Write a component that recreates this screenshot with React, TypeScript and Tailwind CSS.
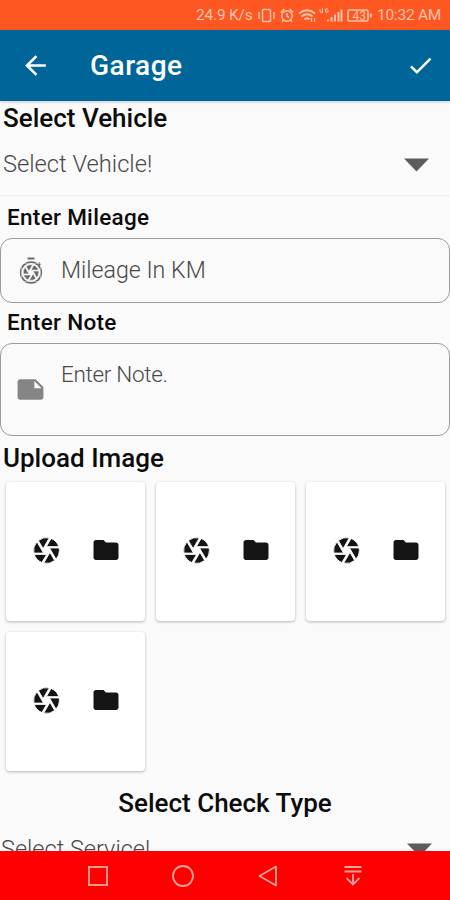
import { MdArrowBack, MdCamera, MdCheck, MdFolder, MdNote } from "react-icons/md";

interface IFieldLabel {
  text: string;
}

const images: number[] = [1, 2, 3, 4];

function StatusBar() {
  return (
    <div className="flex h-[30px] shrink-0 items-center bg-[#ff5722] pl-[196px] pt-[2px] text-[#ffc4ae]">
      <p className="w-[61px] whitespace-nowrap text-[15.5px] leading-none tracking-[-0.2px]">24.9 K/s</p>
      {/* vibrate, alarm, wifi, signal, battery */}
      <svg width="120" height="20" viewBox="0 0 120 20" fill="none" stroke="currentColor" strokeWidth="1.5">
        <rect x="5.5" y="3.5" width="8" height="12" rx="1" />
        <path d="M2 6v7M17 6v7" />
        <circle cx="30" cy="10" r="5.2" />
        <path d="M30 7v3.2l2 1.3M23.8 6.5l3.5-3.5M36.2 6.5l-3.5-3.5M26.5 14L25 15.8M33.5 14L35 15.8" />
        <path d="M42 7.5q8-6.5 16 0M44.5 10.5q5.5-4.5 11 0M47.5 13.5q2.5-2.5 5 0" strokeWidth="1.8" />
        <path d="M54.5 12v4M57.5 12v4" strokeWidth="1.2" />
        <path d="M63 3v3h3M65.5 2v5M71 3h-2.5v3h2.5v-2" strokeWidth="1" />
        <path d="M71 15.5v-2M74.5 15.5v-4.5M78 15.5V8.500M81.5 15.500V6M84.5 15.500V3.500" strokeWidth="2" />
        <rect x="91" y="4" width="20" height="11" rx="1.5" />
        <path d="M113.8 7.5v4" strokeWidth="2" />
        <text x="95.5" y="14" fill="currentColor" stroke="none" fontSize="12">43</text>
      </svg>
      <p className="whitespace-nowrap text-[15.5px] leading-none tracking-[-0.25px]">10:32 AM</p>
    </div>
  );
}

function Header() {
  return (
    <header className="flex h-[71px] shrink-0 items-center bg-[#006699] pl-[20px] pr-[15px] text-white shadow-[0_1px_3px_rgba(0,0,0,0.2)]">
      <MdArrowBack size={31} />
      <h1 className="ml-[39px] grow text-[28px] font-medium leading-none tracking-[0.5px]">Garage</h1>
      <MdCheck size={29} />
    </header>
  );
}

function FieldLabel({ text }: IFieldLabel) {
  return <h3 className="pl-[7px] text-[22.5px] font-medium leading-[30px] tracking-[0.3px]">{text}</h3>;
}

function DropArrow() {
  return (
    <svg width="25" height="14" viewBox="0 0 25 14" fill="#5c5c5c">
      <path d="M0 0.5h25L12.5 13.5z" />
    </svg>
  );
}

function MileageIcon() {
  return (
    <svg width="24" height="28" viewBox="0 0 24 28" fill="none" stroke="#6a6a6a" strokeWidth="1.7">
      <path d="M8.5 1.5h7M19.5 6l2 2" strokeWidth="2" />
      <circle cx="12" cy="15.5" r="10.3" />
      <MdCamera x="2.5" y="6" size={19} color="#6a6a6a" stroke="#fafafa" strokeWidth={1} />
    </svg>
  );
}

function ImageCard() {
  return (
    <div className="flex h-[139px] w-[139px] items-center justify-center gap-[29px] rounded-[4px] bg-white pb-[3px] text-[#141414] shadow-[0_1px_3px_rgba(0,0,0,0.28)]">
      <MdCamera size={31} stroke="#ffffff" strokeWidth={0.7} />
      <MdFolder size={30} />
    </div>
  );
}

function NavBar() {
  return (
    <nav className="flex h-[49px] shrink-0 items-center gap-[61px] bg-[#ff0000] pl-[86px]">
      <svg width="24" height="24" viewBox="0 0 24 24" fill="none" stroke="#ffa39c" strokeWidth="1.8">
        <rect x="3" y="3" width="18" height="18" />
      </svg>
      <svg width="24" height="24" viewBox="0 0 24 24" fill="none" stroke="#ffa39c" strokeWidth="1.8">
        <circle cx="12" cy="12" r="10" />
      </svg>
      <svg width="24" height="24" viewBox="0 0 24 24" fill="none" stroke="#ffa39c" strokeWidth="1.8" strokeLinejoin="round">
        <path d="M20 2.5v19L3.5 12z" />
      </svg>
      <svg width="24" height="24" viewBox="0 0 24 24" fill="none" stroke="#ffa39c" strokeWidth="1.8">
        <path d="M3.5 3h17M3.5 7.5h17M12 10v10M5.5 14l6.5 6.5 6.5-6.5" />
      </svg>
    </nav>
  );
}

function App() {
  return (
    <div className="flex h-[900px] w-[450px] flex-col overflow-hidden bg-[#fafafa] font-['Roboto',sans-serif] text-[#0c0c0c]">
      <StatusBar />
      <Header />
      <main className="min-h-0 grow overflow-hidden">
        <h2 className="pl-[3px] text-[26px] font-medium leading-[34px]">Select Vehicle</h2>
        <div className="flex h-[61px] items-center justify-between border-b border-[#f0f0f0] pl-[3px] pr-[21px]">
          <p className="text-[23.7px] font-light leading-none text-[#484848]">Select Vehicle!</p>
          <DropArrow />
        </div>
        <div className="pt-[6px]">
          <FieldLabel text="Enter Mileage" />
        </div>
        <div className="mt-[6px] flex h-[65px] items-center rounded-[12px] border border-[#9c9c9c] pl-[18px]">
          <MileageIcon />
          <p className="ml-[18px] text-[23.2px] font-light leading-none text-[#484848]">Mileage In KM</p>
        </div>
        <div className="pt-[4px]">
          <FieldLabel text="Enter Note" />
        </div>
        <div className="mt-[6px] flex h-[93px] items-center rounded-[12px] border border-[#9c9c9c] pl-[14px]">
          <MdNote size={31} color="#858585" />
          <p className="mb-[30px] ml-[15px] text-[22.5px] font-light leading-none tracking-[-0.3px] text-[#484848]">Enter Note.</p>
        </div>
        <h2 className="mt-[5px] pl-[3px] text-[26px] font-medium leading-[34px]">Upload Image</h2>
        <div className="mt-[7px] flex flex-wrap gap-[11px] pl-[6px]">
          {images.map((id) => (
            <ImageCard key={id} />
          ))}
        </div>
        <h2 className="mt-[15px] text-center text-[26px] font-medium leading-[34px]">Select Check Type</h2>
        <div className="mt-[14px] flex items-start justify-between pl-px pr-[18px]">
          <p className="text-[23.5px] font-light leading-[30px] text-[#484848]">Select Service!</p>
          <div className="pt-[9px]">
            <DropArrow />
          </div>
        </div>
      </main>
      <NavBar />
    </div>
  );
}

export default App;
